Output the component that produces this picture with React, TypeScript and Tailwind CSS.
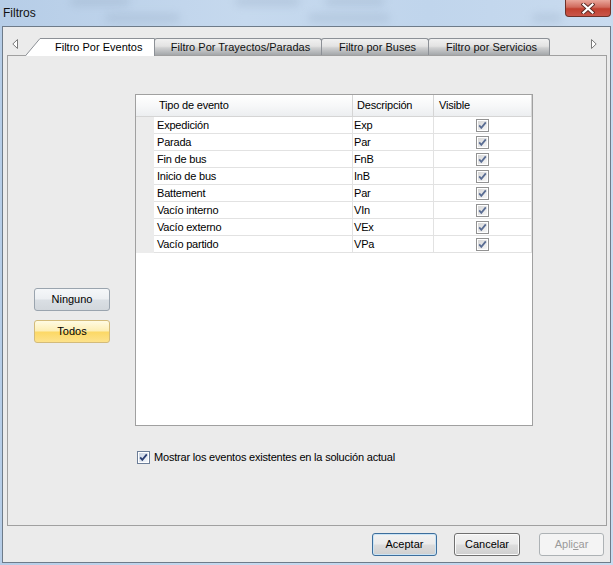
import React from 'react';

const rows: [string, string][] = [
  ['Expedición', 'Exp'],
  ['Parada', 'Par'],
  ['Fin de bus', 'FnB'],
  ['Inicio de bus', 'InB'],
  ['Battement', 'Par'],
  ['Vacío interno', 'VIn'],
  ['Vacío externo', 'VEx'],
  ['Vacío partido', 'VPa']
];

function CheckBox({ blue = false }: { blue?: boolean }) {
  return (
    <svg width="13" height="13" viewBox="0 0 13 13" className="block shrink-0">
      <defs>
        <linearGradient id={blue ? 'cbb' : 'cbg'} x1="0" y1="0" x2="1" y2="1">
          <stop offset="0" stopColor={blue ? '#cbd6e4' : '#d6d6d6'} />
          <stop offset="1" stopColor={blue ? '#f4f7fb' : '#f7f7f7'} />
        </linearGradient>
      </defs>
      <rect x="0.5" y="0.5" width="12" height="12" fill="#fff" stroke={blue ? '#6c7e98' : '#929292'} />
      <rect x="2" y="2" width="9" height="9" fill={`url(#${blue ? 'cbb' : 'cbg'})`} />
      <path d="M3.2 6.4 L5.3 8.8 L9.8 3.4" fill="none" stroke={blue ? '#2b3f73' : '#5a6d93'} strokeWidth="1.8" />
    </svg>
  );
}

function Arrow({ dir }: { dir: 'left' | 'right' }) {
  return (
    <svg width="6" height="10" viewBox="0 0 6 10" className="block">
      {dir === 'left' ? (
        <path d="M5.5 0.5 L0.8 5 L5.5 9.5 Z" fill="#fff" stroke="#7a7a7a" />
      ) : (
        <path d="M0.5 0.5 L5.2 5 L0.5 9.5 Z" fill="#fff" stroke="#7a7a7a" />
      )}
    </svg>
  );
}

function InactiveTab({ label, width }: { label: string; width: string }) {
  return (
    <div
      className={`-ml-px flex h-[17px] items-center justify-center rounded-t-[3px] border border-b-0 border-[#8c9096] bg-[linear-gradient(180deg,#f1f1f1_0%,#e3e3e3_45%,#cfd0d1_55%,#a4a7aa_100%)] pl-[5px] text-[#111] ${width}`}
    >
      {label}
    </div>
  );
}

export default function App() {
  return (
    <div className="relative flex h-[565px] w-[613px] flex-col overflow-hidden bg-[linear-gradient(90deg,#b6cde7_0%,#c6d9ee_40%,#c0d5ec_70%,#c9dbef_100%)] font-['Liberation_Sans',Arial,sans-serif] text-[11px] text-black">
      {/* blurred desktop behind the glass */}
      <div className="pointer-events-none absolute left-[70px] top-[-3px] h-[9px] w-[60px] rounded-full bg-[#8ea3bb] opacity-30 blur-[4px]" />
      <div className="pointer-events-none absolute left-[235px] top-[-3px] h-[9px] w-[65px] rounded-full bg-[#8ea3bb] opacity-30 blur-[4px]" />
      <div className="pointer-events-none absolute left-[325px] top-[-3px] h-[9px] w-[60px] rounded-full bg-[#8ea3bb] opacity-30 blur-[4px]" />
      <div className="pointer-events-none absolute left-[105px] top-[14px] h-[8px] w-[75px] rounded-full bg-[#8ea3bb] opacity-30 blur-[4px]" />
      <div className="pointer-events-none absolute left-[308px] top-[14px] h-[8px] w-[82px] rounded-full bg-[#8ea3bb] opacity-30 blur-[4px]" />
      <div className="pointer-events-none absolute left-[532px] top-[14px] h-[8px] w-[30px] rounded-full bg-[#8ea3bb] opacity-30 blur-[4px]" />

      <div className="relative flex h-[26px] items-start justify-between">
        <span className="pl-[3px] pt-[6px] text-[12px] leading-[15px] text-[#111]">Filtros</span>
        <div className="mr-[2px] flex h-[17px] w-[46px] items-center justify-center rounded-b-[4px] border border-t-0 border-[#6d3128] bg-[linear-gradient(180deg,#e9a79b_0%,#d06a5c_45%,#c1402f_55%,#c9564a_100%)]">
          <svg width="14" height="11" viewBox="0 0 14 11">
            <path d="M2.5 1.5 L11.5 9.5 M11.5 1.5 L2.5 9.5" stroke="#5a2a24" strokeWidth="4" strokeLinecap="square" />
            <path d="M2.5 1.5 L11.5 9.5 M11.5 1.5 L2.5 9.5" stroke="#fff" strokeWidth="2.2" strokeLinecap="square" />
          </svg>
        </div>
      </div>

      <div className="relative mx-[2px] flex h-[537px] flex-col border border-[#6e7b89] bg-[#ebebeb]">
        {/* tab strip */}
        <div className="flex h-[28px] items-end">
          <div className="flex w-[22px] justify-center self-end pb-[6px] pl-[2px]">
            <Arrow dir="left" />
          </div>
          <div className="relative z-10 -mb-px flex h-[18px] w-[130px] items-center pl-[30px]">
            <svg width="130" height="18" viewBox="0 0 130 18" className="absolute left-0 top-0">
              <path d="M0 18 L15 0.5 L129.5 0.5 L129.5 18 Z" fill="#fff" />
              <path d="M0.3 18 L15 0.5 L129.5 0.5 L129.5 18" fill="none" stroke="#8c9096" />
            </svg>
            <span className="relative">Filtro Por Eventos</span>
          </div>
          <InactiveTab label="Filtro Por Trayectos/Paradas" width="w-[168px]" />
          <InactiveTab label="Filtro por Buses" width="w-[108px]" />
          <InactiveTab label="Filtro por Servicios" width="w-[122px]" />
          <div className="ml-auto mr-[13px] self-end pb-[6px]">
            <Arrow dir="right" />
          </div>
        </div>

        {/* tab page */}
        <div className="ml-[4px] flex h-[471px] w-[600px] flex-col border border-[#a0a0a0] pt-[38px]">
          <div className="flex">
            <div className="flex w-[127px] flex-col pl-[26px] pt-[194px]">
              <button className="h-[23px] w-[76px] rounded-[3px] border border-[#9aa4ae] bg-[linear-gradient(180deg,#f5f7f9_0%,#eceff2_48%,#dadfe4_52%,#d2d7dc_100%)] text-[11px] text-black">
                Ninguno
              </button>
              <button className="mt-[9px] h-[23px] w-[76px] rounded-[3px] border border-[#d3bb7a] bg-[linear-gradient(180deg,#fffbe3_0%,#fdeeb4_48%,#fcd865_52%,#fde28b_100%)] text-[11px] text-black">
                Todos
              </button>
            </div>

            <div className="h-[332px] w-[398px] border border-[#a0a0a0] bg-white tracking-[-0.2px]">
              <div className="flex h-[22px] border-b border-[#d5d5d5] bg-[linear-gradient(180deg,#ffffff_0%,#f7f8f9_50%,#eceef0_100%)]">
                <div className="flex w-[217px] items-center border-r border-[#d5d5d5] pl-[23px]">Tipo de evento</div>
                <div className="flex w-[81px] items-center border-r border-[#d5d5d5] pl-[4px]">Descripción</div>
                <div className="flex w-[98px] items-center border-r border-[#d5d5d5] pl-[5px]">Visible</div>
              </div>
              {rows.map(([tipo, desc]) => (
                <div key={tipo} className="flex h-[17px]">
                  <div className="w-[18px] bg-[#ececec]" />
                  <div className="flex w-[199px] items-center border-b border-r border-[#e2e2e2] pl-[3px]">{tipo}</div>
                  <div className="flex w-[81px] items-center border-b border-r border-[#e2e2e2] pl-[1px]">{desc}</div>
                  <div className="flex w-[98px] items-center justify-center border-b border-r border-[#e2e2e2]">
                    <CheckBox />
                  </div>
                </div>
              ))}
            </div>
          </div>

          <div className="mt-[23px] flex items-center gap-[4px] pl-[129px] tracking-[-0.2px]">
            <CheckBox blue />
            <span>Mostrar los eventos existentes en la solución actual</span>
          </div>
        </div>

        {/* dialog buttons */}
        <div className="mt-[7px] flex justify-end pr-[6px]">
          <button className="h-[23px] w-[65px] rounded-[3px] border border-[#3d6e9c] bg-[linear-gradient(180deg,#f2f2f2_0%,#ebebeb_48%,#dddddd_52%,#cfcfcf_100%)] text-[11px] text-black shadow-[inset_0_0_0_1px_#c9e3f5]">
            Aceptar
          </button>
          <button className="ml-[17px] h-[23px] w-[66px] rounded-[3px] border border-[#707070] bg-[linear-gradient(180deg,#f2f2f2_0%,#ebebeb_48%,#dddddd_52%,#cfcfcf_100%)] text-[11px] text-black shadow-[inset_0_0_0_1px_#fbfbfb]">
            Cancelar
          </button>
          <button className="ml-[19px] h-[23px] w-[65px] rounded-[3px] border border-[#adb2b5] bg-[#f4f4f4] text-[11px] text-[#9a9a9a]">
            Apli<span className="underline">c</span>ar
          </button>
        </div>
      </div>
    </div>
  );
}
